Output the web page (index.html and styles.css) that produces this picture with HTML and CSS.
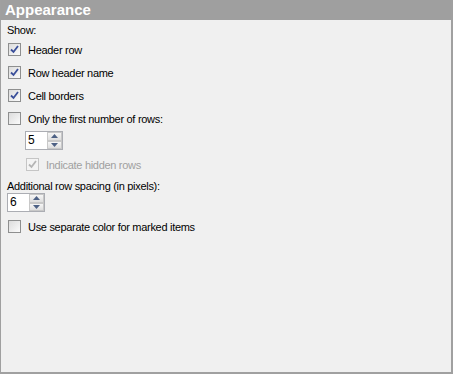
FILE: index.html
```html
<html>
<head>
  <title>Appearance</title>
  <link rel="stylesheet" href="styles.css">
</head>
<body>
  <div class="panel">
    <div class="panel-title">Appearance</div>
    <div class="panel-body">
      <div class="label">Show:</div>

      <div class="check-row">
        <span class="check checked"><svg width="9" height="9" viewBox="0 0 9 9"><path d="M1 4.5 L3.5 7 L8 1" fill="none" stroke="#3a4f9a" stroke-width="1.8"/></svg></span>
        <span class="check-text">Header row</span>
      </div>
      <div class="check-row">
        <span class="check checked"><svg width="9" height="9" viewBox="0 0 9 9"><path d="M1 4.5 L3.5 7 L8 1" fill="none" stroke="#3a4f9a" stroke-width="1.8"/></svg></span>
        <span class="check-text">Row header name</span>
      </div>
      <div class="check-row">
        <span class="check checked"><svg width="9" height="9" viewBox="0 0 9 9"><path d="M1 4.5 L3.5 7 L8 1" fill="none" stroke="#3a4f9a" stroke-width="1.8"/></svg></span>
        <span class="check-text">Cell borders</span>
      </div>
      <div class="check-row">
        <span class="check"></span>
        <span class="check-text">Only the first number of rows:</span>
      </div>

      <div class="spinner indent">
        <span class="spinner-value">5</span>
        <span class="spinner-buttons">
          <span class="spin-btn"><svg width="7" height="4" viewBox="0 0 7 4"><path d="M0 4 L3.5 0 L7 4 Z" fill="#4d6185"/></svg></span>
          <span class="spin-btn"><svg width="7" height="4" viewBox="0 0 7 4"><path d="M0 0 L3.5 4 L7 0 Z" fill="#4d6185"/></svg></span>
        </span>
      </div>

      <div class="check-row indent disabled hidden-rows">
        <span class="check checked"><svg width="9" height="9" viewBox="0 0 9 9"><path d="M1 4.5 L3.5 7 L8 1" fill="none" stroke="#b5b5b5" stroke-width="1.8"/></svg></span>
        <span class="check-text">Indicate hidden rows</span>
      </div>

      <div class="label spacing-label">Additional row spacing (in pixels):</div>
      <div class="spinner spacing-spinner">
        <span class="spinner-value">6</span>
        <span class="spinner-buttons">
          <span class="spin-btn"><svg width="7" height="4" viewBox="0 0 7 4"><path d="M0 4 L3.5 0 L7 4 Z" fill="#4d6185"/></svg></span>
          <span class="spin-btn"><svg width="7" height="4" viewBox="0 0 7 4"><path d="M0 0 L3.5 4 L7 0 Z" fill="#4d6185"/></svg></span>
        </span>
      </div>

      <div class="check-row marked">
        <span class="check"></span>
        <span class="check-text">Use separate color for marked items</span>
      </div>
    </div>
  </div>
</body>
</html>
```

FILE: styles.css
```css
body {
  margin: 0;
  font-family: 'Liberation Sans', Arial, sans-serif;
  font-size: 11px;
  letter-spacing: -0.3px;
  color: #000;
  background: #f0f0f0;
}

.panel {
  width: 453px;
  height: 374px;
  box-sizing: border-box;
  border-left: 1px solid #a0a0a0;
  border-right: 2px solid #a0a0a0;
  border-bottom: 2px solid #a0a0a0;
  background: #f0f0f0;
}

.panel-title {
  height: 20px;
  background: #9f9f9f;
  color: #fff;
  font-weight: bold;
  font-size: 15px;
  letter-spacing: 0;
  line-height: 20px;
  padding-left: 4px;
}

.panel-body {
  padding: 2px 0 0 6px;
  display: flex;
  flex-direction: column;
}

.label {
  height: 16px;
  line-height: 16px;
}

.check-row {
  display: flex;
  align-items: center;
  height: 23px;
}

.check {
  width: 11px;
  height: 11px;
  border: 1px solid #8e8f8f;
  background: linear-gradient(135deg, #dcdcdc, #fbfbfb);
  margin-left: 1px;
  margin-right: 7px;
  display: flex;
  align-items: center;
  justify-content: center;
}

.disabled {
  color: #a0a0a0;
}

.disabled .check {
  border-color: #c5c5c5;
  background: #f4f4f4;
}

.indent {
  margin-left: 18px;
}

.hidden-rows {
  margin-top: 3px;
}

.spinner {
  width: 38px;
  height: 19px;
  box-sizing: border-box;
  border: 1px solid #abadb3;
  background: #fff;
  display: flex;
  margin-top: 1px;
}

.spinner.indent {
  margin-left: 18px;
}

.spinner-value {
  flex: 1;
  padding-left: 2px;
  font-size: 12px;
  line-height: 17px;
}

.spinner-buttons {
  width: 15px;
  display: flex;
  flex-direction: column;
}

.spin-btn {
  flex: 1;
  display: flex;
  align-items: center;
  justify-content: center;
  background: linear-gradient(#f6f6f6, #dedede);
  border: 1px solid #c8c8c8;
}

.spacing-label {
  margin-top: 3px;
  height: 14px;
  line-height: 14px;
}

.spacing-spinner {
  margin-top: 0;
}

.marked {
  margin-top: 3px;
}
```
